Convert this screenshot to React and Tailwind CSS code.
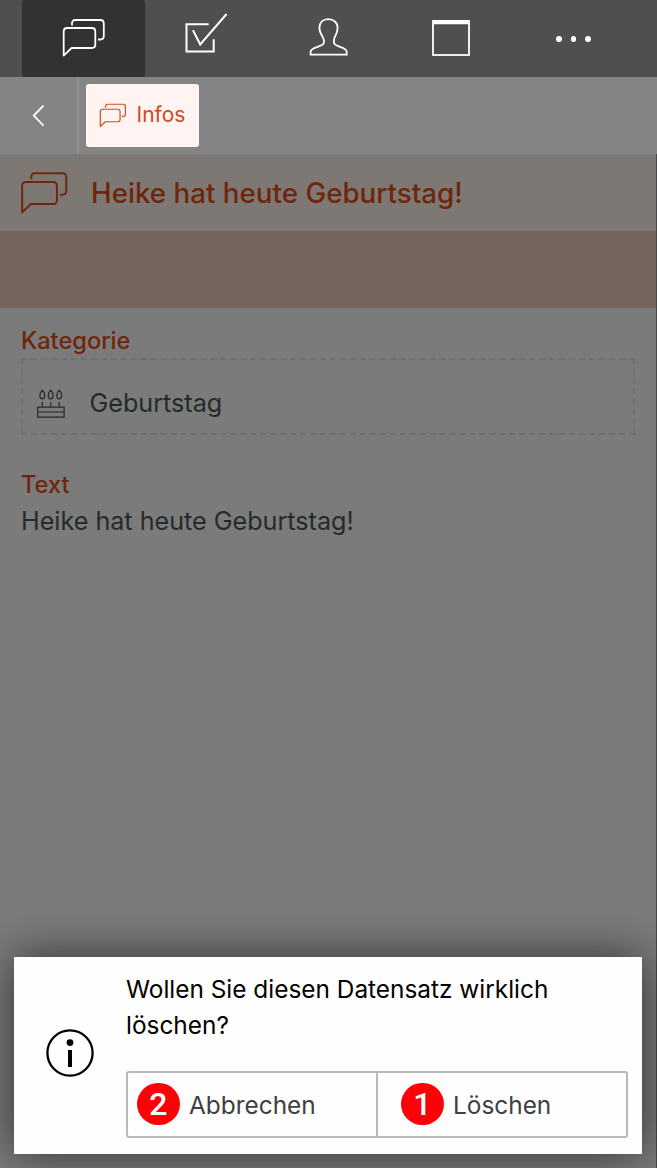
import React from "react";

function BubblesIcon({ className, strokeWidth }) {
  return (
    <svg viewBox="0 0 44 40" className={className} fill="none" stroke="currentColor" strokeWidth={strokeWidth} strokeLinejoin="round">
      <path d="M1.7 37.6V13.5Q1.7 10 5.2 10H29.8Q33.3 10 33.3 13.5V26.5Q33.3 30 29.8 30H9.6Z" />
      <path d="M10 7.6V5.5Q10 2 13.5 2H38.3Q41.8 2 41.8 5.5V18Q41.8 21.5 38.3 21.5H36" />
    </svg>
  );
}

function CheckIcon() {
  return (
    <svg viewBox="0 0 44 42" className="h-[42px] w-11" fill="none" stroke="currentColor" strokeWidth="2">
      <path d="M24.7 11.2H2.5V38.5H29.7V26.3" />
      <path d="M9 17.3L16.2 31.4L42.6 1" />
    </svg>
  );
}

function PersonIcon() {
  return (
    <svg viewBox="0 0 40 40" className="size-10" fill="none" stroke="currentColor" strokeWidth="1.8">
      <path d="M2.6 37.6V34.8C2.6 29.8 15.9 30 15.9 25.5V23.2C15.9 20.5 11.4 16.5 11.4 10.9C11.4 5.4 15.1 2.2 20.3 2.2C25.5 2.2 29.6 5.4 29.6 10.9C29.6 16.5 25.9 20.5 25.9 23.2V25.5C25.9 30 38.7 29.8 38.7 34.8V37.6Z" />
    </svg>
  );
}

function WindowIcon() {
  return (
    <svg viewBox="0 0 38 36" className="h-9 w-[38px]" fill="none" stroke="currentColor">
      <rect x="1" y="1" width="36" height="34" strokeWidth="1.8" />
      <path d="M1 2.2H37" strokeWidth="4" />
    </svg>
  );
}

function CakeIcon() {
  return (
    <svg viewBox="0 0 28 30" className="h-[30px] w-7" fill="none" stroke="currentColor" strokeWidth="1.2">
      <path d="M.7 18.2H27.1V28.1H.7ZM.7 23H27.1M5.3 18.2V13M13.7 18.2V13M22.2 18.2V13" />
      <path d="M5.3 1.2C2 4.5 2.2 9.8 5.3 9.8S8.6 4.5 5.3 1.2ZM13.7 1.2C10.4 4.5 10.6 9.8 13.7 9.8S17 4.5 13.7 1.2ZM22.2 1.2C18.9 4.5 19.1 9.8 22.2 9.8S25.5 4.5 22.2 1.2Z" />
    </svg>
  );
}

function Badge({ children }) {
  return (
    <span className="flex size-[42.5px] shrink-0 items-center justify-center rounded-full bg-[#ff0008] font-[Roboto] text-[32px] leading-none font-medium text-white">
      {children}
    </span>
  );
}

export default function App() {
  return (
    <div className="flex h-[1168px] w-[657px] flex-col overflow-hidden bg-[#7b7b7b] font-[Inter,sans-serif] text-[25.15px] text-[#252b2a]">
      <nav className="flex h-[77px] shrink-0 bg-[#4f4f4f] pl-[22px] text-white">
        <div className="flex w-[123px] justify-center rounded-xs bg-[#323232] pt-[18px]">
          <BubblesIcon className="h-10 w-11" strokeWidth={1.8} />
        </div>
        <div className="flex w-[123px] justify-center pt-[13px] pr-px">
          <CheckIcon />
        </div>
        <div className="flex w-[122px] justify-center pt-[17px] pr-0.5">
          <PersonIcon />
        </div>
        <div className="flex w-[122px] justify-center pt-5">
          <WindowIcon />
        </div>
        <div className="flex w-[123px] items-center justify-center gap-[9px] pt-px">
          <span className="size-[5.5px] rounded-full bg-white" />
          <span className="size-[5.5px] rounded-full bg-white" />
          <span className="size-[5.5px] rounded-full bg-white" />
        </div>
      </nav>

      <div className="flex h-[77px] shrink-0 bg-[#848484]">
        <div className="flex w-[79px] items-center border-r-2 border-[#929292] pl-8 text-white">
          <svg viewBox="0 0 13 22" className="h-[22px] w-[13px]" fill="none" stroke="currentColor" strokeWidth="1.8">
            <path d="M11.5 .6L1.8 10.6L11.5 20.6" />
          </svg>
        </div>
        <div className="mt-[7px] ml-[7px] flex h-[63px] w-[113px] items-center rounded-[3px] bg-[#fff4f1] pl-[13px] text-[#d2491c]">
          <BubblesIcon className="h-[25px] w-7" strokeWidth={1.9} />
          <span className="ml-[9.5px] pb-0.5 text-[21px]">Infos</span>
        </div>
      </div>

      <main className="flex flex-1 flex-col border-r border-[#484848]">
        <div className="flex h-[77px] shrink-0 items-center bg-[#7e7874] pl-5 text-[#6e260c]">
          <BubblesIcon className="h-11 w-[49px]" strokeWidth={1.8} />
          <h1 className="ml-[22px] pt-px text-[27.75px] leading-[40px] font-medium whitespace-nowrap">Heike hat heute Geburtstag!</h1>
        </div>
        <div className="h-[77px] shrink-0 bg-[#76655d]" />

        <section className="flex flex-1 flex-col pr-[21px] pl-[21px]">
          <h2 className="mt-[15px] h-[35px] text-[23.6px] leading-[35px] font-medium text-[#6e260c]">Kategorie</h2>
          <div className="flex h-[77px] items-center border-2 border-dashed border-[#6f6f6f] pt-[14px] pl-[14px]">
            <CakeIcon />
            <span className="ml-[24.5px] pb-0.5 leading-[36px]">Geburtstag</span>
          </div>
          <h2 className="mt-[32px] h-[35px] text-[23.6px] leading-[35px] font-medium text-[#6e260c]">Text</h2>
          <p className="mt-px leading-[36px]">Heike hat heute Geburtstag!</p>
        </section>

        <div className="mr-[14px] mb-[14px] ml-[14px] flex h-[197px] w-[628px] shrink-0 bg-[#fefefe] shadow-[0_0_42px_rgba(0,0,0,0.6)]">
          <div className="flex w-28 items-center justify-center pb-1.5">
            <svg viewBox="0 0 48 48" className="size-12 text-black" fill="none">
              <circle cx="24" cy="24" r="22.6" stroke="currentColor" strokeWidth="2.3" />
              <circle cx="24" cy="13.6" r="3.4" fill="currentColor" />
              <rect x="22" y="21" width="4" height="17" fill="currentColor" />
            </svg>
          </div>
          <div className="flex w-[502px] flex-col pt-[14px]">
            <p className="h-[72px] w-[480px] text-[24.4px] leading-[36px] text-black">Wollen Sie diesen Datensatz wirklich löschen?</p>
            <div className="mt-[28px] flex h-[67px] rounded-[3px] border-2 border-[#b9b9b9] text-[24.4px] leading-[36px] text-[#404040]">
              <button className="flex w-[250px] items-center gap-[9.5px] border-r-2 border-[#b9b9b9] pl-[9px] pb-px">
                <Badge>2</Badge>
                <span className="pt-px">Abbrechen</span>
              </button>
              <button className="flex flex-1 items-center gap-[9.5px] pl-[23px] pb-px">
                <Badge>1</Badge>
                <span className="pt-px">Löschen</span>
              </button>
            </div>
          </div>
        </div>
      </main>
    </div>
  );
}
